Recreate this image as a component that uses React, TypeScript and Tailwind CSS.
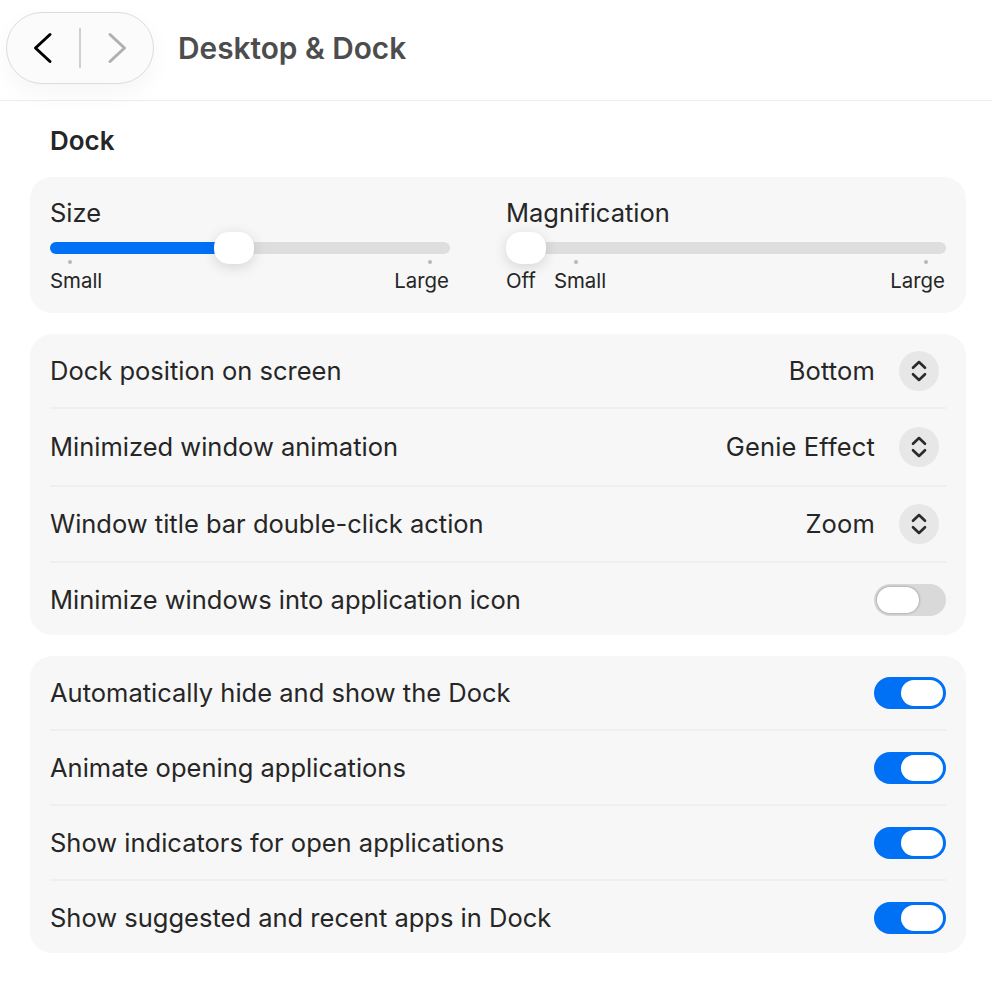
import type { ReactNode } from "react";

const font = { fontFamily: "Inter, 'Noto Sans', sans-serif" };

const Chevrons = () => (
  <div className="flex size-10 items-center justify-center rounded-full bg-[#e7e7e7]">
    <svg width="16" height="22" viewBox="0 0 16 22" fill="none" stroke="#2a2a2a" strokeWidth="2.6" strokeLinecap="round" strokeLinejoin="round">
      <path d="M2 7.8 8 2l6 5.8" />
      <path d="M2 14.2 8 20l6-5.8" />
    </svg>
  </div>
);

const Toggle = ({ on }: { on?: boolean }) => (
  <div className={`flex h-8 w-[72px] items-center rounded-full px-[3px] ${on ? "justify-end bg-[#0071f5]" : "justify-start bg-[#d9d9d9]"}`}>
    <div className={`h-[26px] w-[42px] rounded-full bg-white ${on ? "" : "shadow-[0_0_2px_1px_rgba(0,0,0,0.18)]"}`} />
  </div>
);

const Divided = ({ className, children }: { className: string; children: ReactNode }) => (
  <div className={`flex items-center justify-between border-b-2 border-[#efefef] ${className}`}>{children}</div>
);

const SelectRow = ({ label, value, className }: { label: string; value: string; className: string }) => (
  <Divided className={className}>
    <span>{label}</span>
    <div className="flex items-center gap-6 pr-[7px]">
      <span className="tracking-[0.15px]">{value}</span>
      <Chevrons />
    </div>
  </Divided>
);

const LastRow = ({ label, on, className }: { label: string; on?: boolean; className: string }) => (
  <div className={`flex h-[72px] items-center justify-between ${className}`}>
    <span>{label}</span>
    <Toggle on={on} />
  </div>
);

const ToggleRow = ({ label }: { label: string }) => (
  <Divided className="h-[75px]">
    <span>{label}</span>
    <Toggle on />
  </Divided>
);

const Tick = () => <span className="block size-1 rounded-full bg-[#b8b8b8]" />;

const Slider = ({ percent }: { percent: number }) => (
  <div className="relative h-3 rounded-full bg-[#dedede]">
    {percent > 0 && <div className="h-3 rounded-full bg-[#0071f5]" style={{ width: `${percent + 3}%` }} />}
    <div
      className="absolute top-[-10px] h-8 w-10 rounded-[15px] bg-white shadow-[0_3px_14px_rgba(0,0,0,0.14)]"
      style={{ left: `${percent}%` }}
    />
  </div>
);

export default function App() {
  return (
    <div className="min-h-[996px] bg-white text-[25.5px] leading-none text-[#262626]" style={font}>
      {/* Toolbar */}
      <header className="flex h-[101px] items-start gap-6 border-b border-[#ececec] pl-[6px] pt-3">
        <div className="flex h-[72px] w-[148px] items-center justify-center gap-[25px] rounded-full border border-[#dcdcdc] bg-[#fbfbfb] shadow-[0_10px_24px_rgba(0,0,0,0.04)]">
          <svg width="22" height="32" viewBox="0 0 22 32" fill="none" stroke="#000" strokeWidth="3" strokeLinecap="round" strokeLinejoin="round">
            <path d="M18 2.5 3.5 16 18 29.5" />
          </svg>
          <div className="h-10 w-[2px] bg-[#cfcfcf]" />
          <svg width="22" height="32" viewBox="0 0 22 32" fill="none" stroke="#b0b0b0" strokeWidth="3" strokeLinecap="round" strokeLinejoin="round">
            <path d="M4 2.5 18.5 16 4 29.5" />
          </svg>
        </div>
        <h1 className="mt-[20px] text-[29.8px] font-semibold leading-[32px] text-[#4d4d4d]">Desktop &amp; Dock</h1>
      </header>

      <main className="pl-[30px] pr-[26px]">
        <h2 className="px-5 pb-[22px] pt-[26px] text-[26px] font-semibold leading-[28px]">Dock</h2>

        <section className="flex h-[136px] gap-[56px] rounded-[22px] bg-[#f7f7f7] px-5 pt-[22px]">
          <div className="w-[400px]">
            <div className="mb-[15px] leading-[28px]">Size</div>
            <Slider percent={41} />
            <div className="mx-[18px] mt-[6px] flex justify-between"><Tick /><Tick /></div>
            <div className="mt-[5px] flex justify-between pr-[1px] text-[20.4px] leading-[24px]">
              <span>Small</span>
              <span>Large</span>
            </div>
          </div>
          <div className="flex-1">
            <div className="mb-[15px] leading-[28px]">Magnification</div>
            <Slider percent={0} />
            <div className="ml-[68px] mr-[18px] mt-[6px] flex justify-between"><Tick /><Tick /></div>
            <div className="mt-[5px] flex pr-[1px] text-[20.4px] leading-[24px]">
              <span>Off</span>
              <span className="ml-[18px]">Small</span>
              <span className="ml-auto">Large</span>
            </div>
          </div>
        </section>

        <section className="mt-[21px] rounded-[22px] bg-[#f7f7f7] px-5">
          <SelectRow className="h-[75px]" label="Dock position on screen" value="Bottom" />
          <SelectRow className="h-[78px]" label="Minimized window animation" value="Genie Effect" />
          <SelectRow className="h-[76px]" label="Window title bar double-click action" value="Zoom" />
          <LastRow className="pt-[1px]" label="Minimize windows into application icon" />
        </section>

        <section className="mt-[21px] rounded-[22px] bg-[#f7f7f7] px-5">
          <ToggleRow label="Automatically hide and show the Dock" />
          <ToggleRow label="Animate opening applications" />
          <ToggleRow label="Show indicators for open applications" />
          <LastRow className="pt-[2px]" label="Show suggested and recent apps in Dock" on />
        </section>
      </main>
    </div>
  );
}
